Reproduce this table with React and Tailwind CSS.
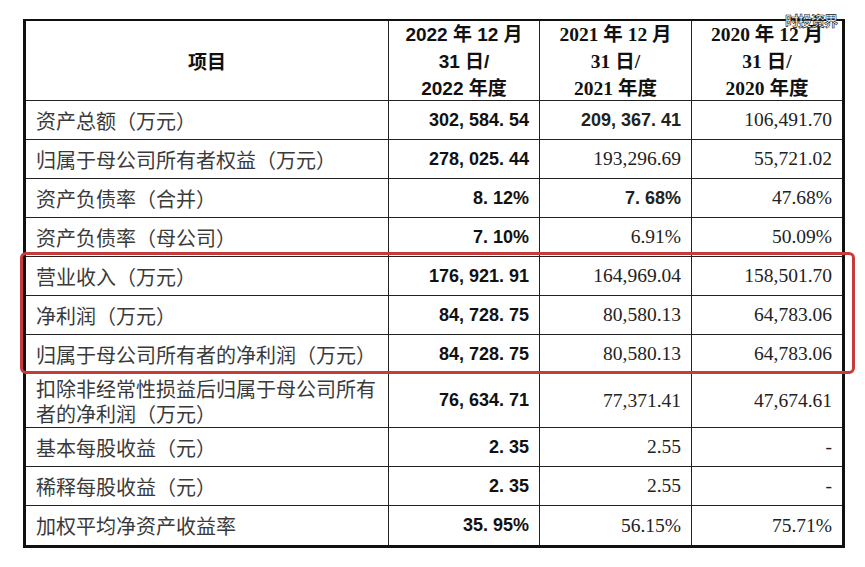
const rows = [
  { label: '资产总额（万元）', a: '302, 584. 54', b: '209, 367. 41', bBold: true, c: '106,491.70' },
  { label: '归属于母公司所有者权益（万元）', a: '278, 025. 44', b: '193,296.69', c: '55,721.02' },
  { label: '资产负债率（合并）', a: '8. 12%', b: '7. 68%', bBold: true, c: '47.68%' },
  { label: '资产负债率（母公司）', a: '7. 10%', b: '6.91%', c: '50.09%' },
  { label: '营业收入（万元）', a: '176, 921. 91', b: '164,969.04', c: '158,501.70' },
  { label: '净利润（万元）', a: '84, 728. 75', b: '80,580.13', c: '64,783.06' },
  { label: '归属于母公司所有者的净利润（万元）', a: '84, 728. 75', b: '80,580.13', c: '64,783.06' },
  { label: '扣除非经常性损益后归属于母公司所有者的净利润（万元）', a: '76, 634. 71', b: '77,371.41', c: '47,674.61', tall: true },
  { label: '基本每股收益（元）', a: '2. 35', b: '2.55', c: '-' },
  { label: '稀释每股收益（元）', a: '2. 35', b: '2.55', c: '-' },
  { label: '加权平均净资产收益率', a: '35. 95%', b: '56.15%', c: '75.71%' },
]

const cjk = "font-['Noto_Sans_CJK_SC',sans-serif]"
const serif = "font-['Liberation_Serif','Noto_Sans_CJK_SC',serif]"
const sansBold = "font-['Liberation_Sans','Noto_Sans_CJK_SC',sans-serif] font-bold"

export default function App() {
  return (
    <div className="relative w-[865px] h-[567px] bg-white overflow-hidden">
      <div className="absolute left-[785px] top-[13px] text-[14px] leading-none tracking-[-1px] text-white font-['Noto_Sans_CJK_SC',sans-serif] font-bold [-webkit-text-stroke:0.6px_#111]">
        时投资界
      </div>

      <div className="ml-[23px] mt-[19px] w-[822px] border-l-[3px] border-t-[2px] border-r-[3px] border-b-[3px] border-[#111]">
        <div className="grid grid-cols-[363px_151px_152px_150px] h-[80px] border-b border-[#222]">
          <div className={`flex items-center justify-center border-r border-[#222] text-[19px] font-bold text-[#111] ${cjk}`}>项目</div>
          <div className={`flex flex-col items-center justify-center border-r border-[#222] text-[19px] leading-[27px] text-[#111] ${sansBold}`}>
            <span>2022 年 12 月</span>
            <span>31 日/</span>
            <span>2022 年度</span>
          </div>
          <div className={`flex flex-col items-center justify-center border-r border-[#222] text-[19.5px] leading-[27px] font-bold text-[#111] ${serif}`}>
            <span>2021 年 12 月</span>
            <span>31 日/</span>
            <span>2021 年度</span>
          </div>
          <div className={`flex flex-col items-center justify-center text-[19.5px] leading-[27px] font-bold text-[#111] ${serif}`}>
            <span>2020 年 12 月</span>
            <span>31 日/</span>
            <span>2020 年度</span>
          </div>
        </div>

        {rows.map((r, i) => (
          <div
            key={i}
            className={`grid grid-cols-[363px_151px_152px_150px] ${r.tall ? 'h-[54px]' : 'h-[39px]'} ${i === rows.length - 1 ? '' : 'border-b border-[#222]'}`}
          >
            <div className={`flex items-center border-r border-[#222] pl-[10px] pr-[6px] text-[20px] leading-[25px] text-[#3a3a3a] ${cjk}`}>
              <span>{r.label}</span>
            </div>
            <div className={`flex items-center justify-end border-r border-[#222] pr-[10px] text-[18px] text-[#111] ${sansBold}`}>{r.a}</div>
            <div className={`flex items-center justify-end border-r border-[#222] pr-[10px] text-[#222] ${r.bBold ? `text-[18px] ${sansBold}` : `text-[19.5px] ${serif}`}`}>{r.b}</div>
            <div className={`flex items-center justify-end pr-[10px] text-[19.5px] text-[#222] ${serif}`}>{r.c}</div>
          </div>
        ))}
      </div>

      <div className="absolute left-[20px] top-[252px] w-[835px] h-[122px] rounded-[6px] border-[3px] border-[#c63c3a]" />
    </div>
  )
}
